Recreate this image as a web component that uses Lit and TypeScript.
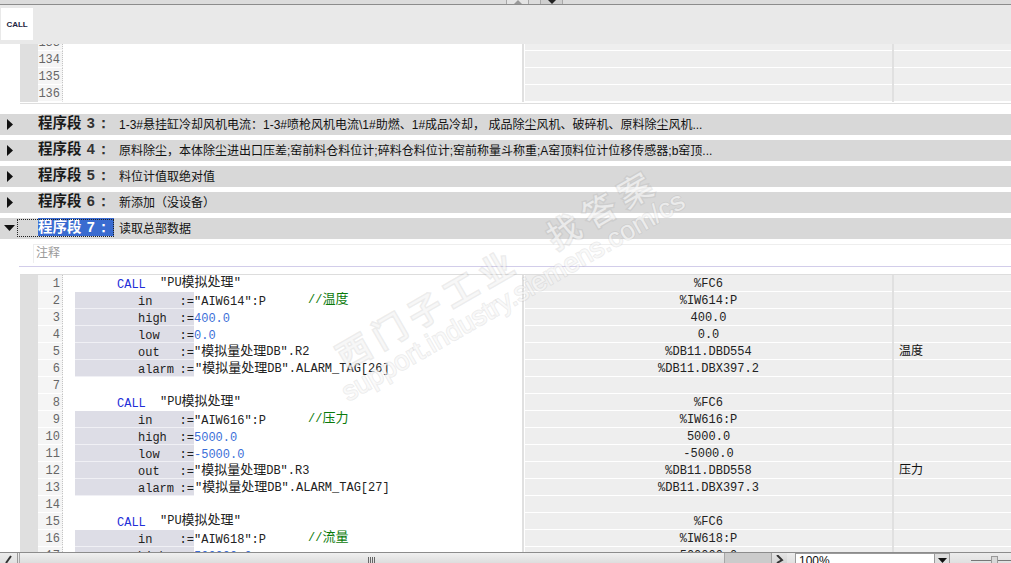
import { LitElement, html, css, nothing } from "lit";
import { customElement } from "lit/decorators.js";

type Row = { n: number; kind?: "call" | "param"; name?: string; val?: string; valClass?: string; note?: string; addr?: string; cmt?: string; tight?: boolean };

const param = (n: number, name: string, val: string, addr: string, extra: Partial<Row> = {}): Row => ({ n, kind: "param", name, val, addr, ...extra });

const rows: Row[] = [
  { n: 1, kind: "call", addr: "%FC6" },
  param(2, "in", '"AIW614":P', "%IW614:P", { note: "//温度", valClass: "plain" }),
  param(3, "high", "400.0", "400.0", { valClass: "num" }),
  param(4, "low", "0.0", "0.0", { valClass: "num" }),
  param(5, "out", '"模拟量处理DB".R2', "%DB11.DBD554", { cmt: "温度", valClass: "sym" }),
  param(6, "alarm", '"模拟量处理DB".ALARM_TAG[26]', "%DB11.DBX397.2", { tight: true }),
  { n: 7 },
  { n: 8, kind: "call", addr: "%FC6" },
  param(9, "in", '"AIW616":P', "%IW616:P", { note: "//压力", valClass: "plain" }),
  param(10, "high", "5000.0", "5000.0", { valClass: "num" }),
  param(11, "low", "-5000.0", "-5000.0", { valClass: "num" }),
  param(12, "out", '"模拟量处理DB".R3', "%DB11.DBD558", { cmt: "压力", valClass: "sym" }),
  param(13, "alarm", '"模拟量处理DB".ALARM_TAG[27]', "%DB11.DBX397.3", { tight: true }),
  { n: 14 },
  { n: 15, kind: "call", addr: "%FC6" },
  param(16, "in", '"AIW618":P', "%IW618:P", { note: "//流量", valClass: "plain" }),
  param(17, "high", "500000.0", "500000.0", { valClass: "num" }),
];

const nets = [
  { n: 3, t: "1-3#悬挂缸冷却风机电流：1-3#喷枪风机电流\\1#助燃、1#成品冷却， 成品除尘风机、破碎机、原料除尘风机..." },
  { n: 4, t: "原料除尘，本体除尘进出口压差;窑前料仓料位计;碎料仓料位计;窑前称量斗称重;A窑顶料位计位移传感器;b窑顶..." },
  { n: 5, t: "料位计值取绝对值" },
  { n: 6, t: "新添加（没设备）" },
];

const cjk = (s: string) =>
  s.split(/([\u4e00-\u9fff]+)/).map((p, i) => (i % 2 ? html`<span class="cj">${p}</span>` : p));

@customElement("app-root")
export class AppRoot extends LitElement {
  static styles = css`
    :host { display: block; width: 1011px; height: 563px; position: relative; overflow: hidden; background: #fff;
      font-family: "Noto Sans CJK SC", "Liberation Sans", sans-serif; font-size: 12px; color: #111; }
    .page { height: 563px; display: flex; flex-direction: column; }
    .topstrip { height: 4px; background: #dcdcdc; border-bottom: 1px solid #8c8c8c; position: relative; flex: none; }
    .tab { position: absolute; top: 0; height: 4px; width: 23px; background: #e4e4e4; border: solid #a8a8a8; border-width: 0 1px; box-sizing: border-box; }
    .tab.a { left: 506px; }
    .tab.b { left: 540px; background: #cfcfcf; }
    .tab svg { position: absolute; left: 6px; top: 0; }
    .toolbar { height: 39px; background: #e9e9e9; flex: none; display: flex; align-items: flex-start; padding-top: 3px; box-sizing: border-box; position: relative; z-index: 1; }
    .callbtn { margin-left: 1px; width: 32px; height: 32px; background: #fff; display: flex; align-items: center; justify-content: center;
      font: 700 8px "Liberation Sans", sans-serif; color: #1c2440; letter-spacing: -0.1px; }
    .scroll { flex: 1; min-height: 0; overflow: hidden; }
    .inner { margin-top: -10px; }

    .table { margin-left: 20px; display: grid; grid-template-columns: 18px 25px 459px 2px 368px 2px 117px; }
    .table.first { border-bottom: 1px solid #dedede; padding-bottom: 1px; }
    .table.code { border-top: 1px solid #dddddd; }
    .gutter { background: #dfdfdf; }
    .ln { height: 17px; background: #f5f5f5; box-sizing: border-box; border-right: 1px dotted #c4c4c4; border-bottom: 1px solid #fff;
      font: 12px/18px "Liberation Mono", monospace; color: #666; text-align: right; padding-right: 2px; overflow: hidden; }
    .split { background: #e0e0e0; }
    .addr, .cmt { height: 17px; box-sizing: border-box; background: #eeeeee; border-bottom: 1px solid #fff;
      font: 12px/19px "Liberation Mono", monospace; color: #222; white-space: pre; }
    .addr { text-align: center; margin-left: 1px; overflow: hidden; }
    .cmt { padding-left: 5px; font-family: "Noto Sans CJK SC", sans-serif; line-height: 13px; color: #111; }
    .blank { height: 17px; }

    .code-row { height: 17px; display: flex; font: 12px/17px "Liberation Mono", "Noto Sans CJK SC", monospace; white-space: pre; color: #222; overflow: visible; }
    .cj { font-family: "Noto Sans CJK SC", sans-serif; font-size: 13px; }
    .call { margin-left: 54px; width: 43px; color: #1f2fd8; padding-top: 2px; line-height: 16px; }
    .fb { line-height: 11px; }
    .param { margin-left: 12px; width: 119px; box-sizing: border-box; padding-left: 63px; background: #dddde6; border-bottom: 1px solid #f0f0f5; color: #222; display: flex; flex: none; line-height: 21px; }
    .pname { width: 43px; }
    .pname.tight { width: 44px; }
    .val { flex: none; width: 114px; line-height: 13px; }
    .val.num { color: #3c6fd8; line-height: 21px; }
    .val.plain { line-height: 21px; }
    .val.sym { line-height: 13px; }
    .val.tight { margin-left: 1px; }
    .note { color: #0a7a0a; line-height: 12px; }

    .bar { height: 21px; margin-top: 5px; background: #d8d8d8; display: flex; align-items: center; position: relative; }
    .bar.firstbar { margin-top: 10px; }
    .tri { position: absolute; left: 7px; top: 5px; }
    .tri.down { left: 4px; top: 7px; }
    .title { margin-left: 38px; width: 80px; flex: none; font-size: 14.5px; font-weight: 700; color: #1a1a1a; white-space: pre; line-height: 15px; margin-bottom: 4px; }
    .title .no { color: #333; font-family: "Liberation Sans", sans-serif; font-size: 14.5px; margin-left: 2px; }
    .title .co { margin-left: -3px; }
    .desc { font-family: "Liberation Sans", "Noto Sans CJK SC", sans-serif; font-size: 12px; color: #111; white-space: pre; margin-left: 1px; line-height: 17px; margin-top: 2px; }
    .bar.sel .title { margin-left: 38px; width: 76px; background: #3a6bd0; color: #fff; height: 18px; line-height: 16px; margin-right: 4px; margin-bottom: 3px; }
    .bar.sel .title .no { color: #fff; }
    .focus { position: absolute; left: 17px; top: 1px; width: 97px; height: 18px; box-sizing: border-box; border: 1px dotted #222; }

    .comment { margin: 5px 0 0 33px; height: 19px; border: solid #eeeeee; border-width: 1px 0 0 1px; color: #9a9a9a; padding-left: 2px; line-height: 13px; box-sizing: border-box; }
    .rule { margin-top: 3px; margin-left: 19px; height: 1px; background: #d2cdea; }
    .gap { height: 7px; }

    .bottom { height: 10px; flex: none; border-top: 1px solid #8c8c8c; background: linear-gradient(#ececec, #e0e0e0); display: flex; position: relative; overflow: hidden; margin-top: -1px; }
    .b-left { width: 18px; flex: none; border-right: 1px solid #9a9a9a; display: flex; justify-content: center; padding-top: 2px; box-sizing: border-box; }
    .thumb { width: 706px; flex: none; margin-left: 1px; background: linear-gradient(#f0f0f0, #dddddd); border: solid #a6a6a6; border-width: 0 1px; box-sizing: border-box; position: relative; }
    .grip { position: absolute; left: 348px; top: 4px; width: 8px; height: 6px; background: repeating-linear-gradient(90deg, #666 0 1px, transparent 1px 2px); }
    .track { width: 46px; flex: none; background: #cbcbcb; }
    .arrow { width: 16px; flex: none; background: linear-gradient(#e6e6e6, #d4d4d4); border-left: 1px solid #a0a0a0; display: flex; justify-content: center; box-sizing: border-box; padding-top: 2px; }
    .combo { margin-left: 8px; width: 155px; flex: none; box-sizing: border-box; background: #fff; border: solid #9a9a9a; border-width: 1px 1px 0 1px; position: relative; font: 12px/14px "Liberation Sans", sans-serif; padding-left: 3px; color: #111; }
    .dd { position: absolute; right: 0; top: 0; width: 15px; height: 10px; background: #dedede; border-left: 1px solid #9a9a9a; display: flex; justify-content: center; padding-top: 4px; box-sizing: border-box; }
    .slider { flex: 1; position: relative; }
    .line { position: absolute; left: 21px; right: 0; top: 7px; height: 1px; background: #777; }
    .knob { position: absolute; left: 41px; top: 3px; width: 7px; height: 8px; background: #d8d8d8; border: 1px solid #999; box-sizing: border-box; }

    .wm { position: absolute; left: 0; top: 0; width: 1011px; height: 563px; pointer-events: none; z-index: 5; overflow: hidden; }
    .wm span { position: absolute; white-space: pre; transform-origin: 0 50%; transform: rotate(-30deg); line-height: 1; color: rgba(255,255,255,0.6); paint-order: stroke fill; }
    .wm .cn, .wm .cn2 { font-family: "Noto Sans CJK SC", sans-serif; font-size: 33px; letter-spacing: 8px; -webkit-text-stroke: 3px rgba(170,170,170,0.22); }
    .wm .cn { left: 339px; top: 342px; }
    .wm .cn2 { left: 549px; top: 222px; }
    .wm .en { left: 344px; top: 381px; font-size: 27px; font-family: "Liberation Sans", sans-serif; -webkit-text-stroke: 1.8px rgba(170,170,170,0.22); }
  `;

  private titleNo(n: number) {
    return html`<span class="no">${n} <span class="co">：</span></span>`;
  }

  private bar(n: { n: number; t: string }, first = false) {
    return html`<div class="bar ${first ? "firstbar" : ""}">
      <svg class="tri" width="6" height="11" viewBox="0 0 6 11"><path d="M0 0L6 5.5L0 11Z" fill="#111"/></svg>
      <div class="title">程序段 ${this.titleNo(n.n)}</div>
      <div class="desc">${n.t}</div>
    </div>`;
  }

  private code(r: Row) {
    if (r.kind === "call") {
      return html`<div class="code-row"><span class="call">CALL</span><span class="fb">${cjk('"PU模拟处理"')}</span></div>`;
    }
    if (r.kind === "param") {
      return html`<div class="code-row">
        <div class="param"><span class="pname ${r.tight ? "tight" : ""}">${r.name}</span><span>:=</span></div>
        <span class="val ${r.valClass ?? ""} ${r.tight ? "tight" : ""}">${cjk(r.val ?? "")}</span>
        ${r.note ? html`<span class="note">${cjk(r.note)}</span>` : nothing}
      </div>`;
    }
    return html`<div class="code-row"></div>`;
  }

  render() {
    const top = [133, 134, 135, 136];
    return html`<div class="page">
      <div class="topstrip">
        <div class="tab a"><svg width="10" height="4" viewBox="0 0 10 4"><path d="M5 0L9 4H1Z" fill="#999"/></svg></div>
        <div class="tab b"><svg width="10" height="4" viewBox="0 0 10 4"><path d="M1 0H9L5 4Z" fill="#222"/></svg></div>
      </div>
      <div class="toolbar"><div class="callbtn">CALL</div></div>
      <div class="scroll"><div class="inner">
        <div class="table first">
          ${top.map((n) => html`
            <div class="gutter"></div><div class="ln">${n}</div><div class="blank"></div><div class="split"></div><div class="addr"></div><div class="split"></div><div class="cmt"></div>`)}
        </div>
        ${nets.map((n, i) => this.bar(n, i === 0))}
        <div class="bar sel">
          <svg class="tri down" width="11" height="6" viewBox="0 0 11 6"><path d="M0 0H11L5.5 6Z" fill="#111"/></svg>
          <div class="focus"></div>
          <div class="title">程序段 ${this.titleNo(7)}</div>
          <div class="desc">读取总部数据</div>
        </div>
        <div class="comment">注释</div>
        <div class="rule"></div>
        <div class="gap"></div>
        <div class="table code">
          ${rows.map((r) => html`
            <div class="gutter"></div><div class="ln">${r.n}</div>${this.code(r)}<div class="split"></div><div class="addr">${r.addr ?? ""}</div><div class="split"></div><div class="cmt">${r.cmt ?? ""}</div>`)}
        </div>
      </div></div>
      <div class="bottom">
        <div class="b-left"><svg width="8" height="8" viewBox="0 0 8 8"><path d="M1 8L6 1" stroke="#333" stroke-width="2"/></svg></div>
        <div class="thumb"><div class="grip"></div></div>
        <div class="track"></div>
        <div class="arrow"><svg width="8" height="8" viewBox="0 0 8 8"><path d="M1 0L6 5L1 8" stroke="#333" stroke-width="2" fill="none"/></svg></div>
        <div class="combo">100%<div class="dd"><svg width="9" height="5" viewBox="0 0 9 5"><path d="M0 0H9L4.5 5Z" fill="#111"/></svg></div></div>
        <div class="slider"><div class="line"></div><div class="knob"></div></div>
      </div>
      <div class="wm"><span class="cn">西门子工业</span><span class="cn2">找答案</span><span class="en">support.industry.siemens.com/cs</span></div>
    </div>`;
  }
}
